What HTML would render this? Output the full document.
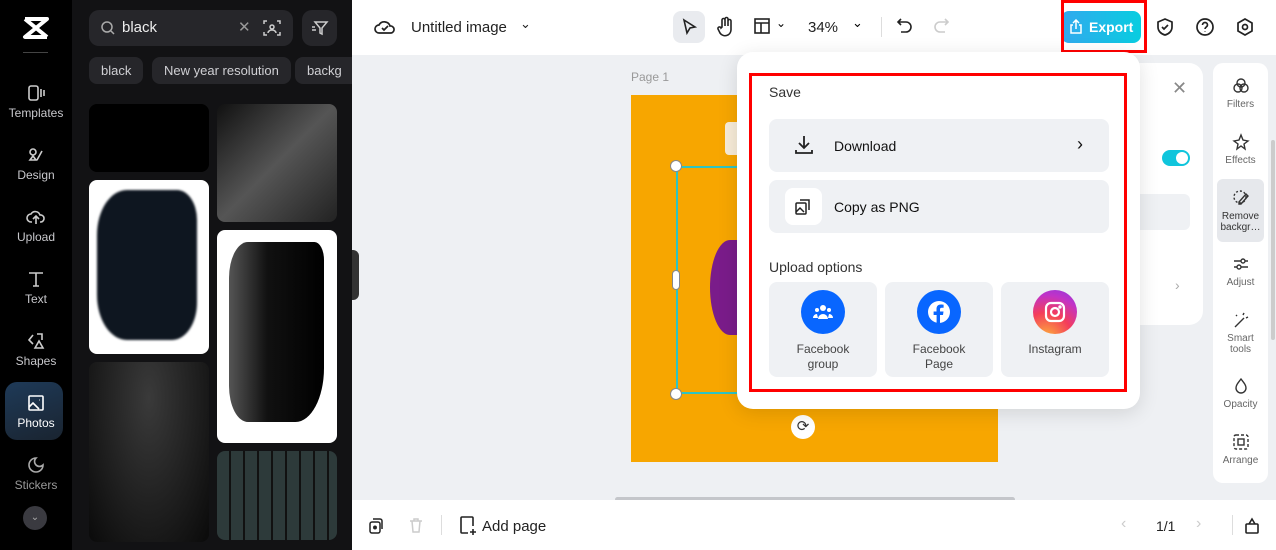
<!DOCTYPE html>
<html><head><meta charset="utf-8"><style>
*{box-sizing:border-box;margin:0;padding:0}
body{width:1276px;height:550px;overflow:hidden;font-family:"Liberation Sans",sans-serif;background:#eef0f3;position:relative}
.abs{position:absolute}
.nav{left:0;top:0;width:72px;height:550px;background:#000}
.navi{position:absolute;left:0;width:72px;text-align:center;color:#c8c8cc;font-size:12px}
.navi svg{display:block;margin:0 auto 3px}
.panel{left:72px;top:0;width:280px;height:550px;background:#121214;overflow:hidden}
.chip{position:absolute;top:57px;height:27px;border-radius:8px;background:#26262a;color:#d0d0d4;font-size:13px;line-height:27px;padding:0 12px;white-space:nowrap}
.img{position:absolute;border-radius:8px;overflow:hidden}
.top{left:352px;top:0;width:924px;height:55px;background:#fff}
.bot{left:352px;top:500px;width:924px;height:50px;background:#fff}
.pop{left:737px;top:52px;width:403px;height:357px;background:#fff;border-radius:16px;box-shadow:0 4px 20px rgba(0,0,0,.12)}
.row{position:absolute;left:32px;width:340px;height:53px;background:#eff1f4;border-radius:8px;font-size:14px;color:#111}
.up{position:absolute;top:230px;width:108px;height:95px;background:#eff1f4;border-radius:8px;text-align:center;font-size:12px;color:#444;line-height:15px}
.up .c{width:44px;height:44px;border-radius:50%;margin:8px auto 8px;display:flex;align-items:center;justify-content:center}
.tool{position:absolute;left:0;width:55px;text-align:center;font-size:10px;color:#666;line-height:11px}
.tool svg{display:block;margin:0 auto 4px}
</style></head><body>
<div class="abs nav">
 <svg class="abs" style="left:22px;top:16px" width="28" height="24" viewBox="0 0 28 24"><path d="M3 3h22L3 21h22M3 3l22 18" stroke="#fff" stroke-width="4" fill="none" stroke-linejoin="round"/></svg>
 <div class="abs" style="left:23px;top:52px;width:25px;height:1px;background:#444"></div>
 <div class="navi" style="top:83px"><svg width="20" height="20" viewBox="0 0 20 20" fill="none" stroke="#ccc" stroke-width="1.6"><rect x="3" y="3" width="9" height="14" rx="2"/><path d="M15 6v8M18 7v6"/></svg>Templates</div>
 <div class="navi" style="top:145px"><svg width="20" height="20" viewBox="0 0 20 20" fill="none" stroke="#ccc" stroke-width="1.6"><circle cx="7" cy="7" r="3"/><path d="M11 15l5-9M4 15h6l-3-4z"/></svg>Design</div>
 <div class="navi" style="top:207px"><svg width="20" height="20" viewBox="0 0 20 20" fill="none" stroke="#ccc" stroke-width="1.6"><path d="M6 15H5a4 4 0 010-8 5 5 0 019 1 3 3 0 011 7h-1M10 17v-7M7 12l3-3 3 3"/></svg>Upload</div>
 <div class="navi" style="top:269px"><svg width="20" height="20" viewBox="0 0 20 20" fill="none" stroke="#ccc" stroke-width="1.6"><path d="M3 4h14M10 4v13M7 17h6"/></svg>Text</div>
 <div class="navi" style="top:331px"><svg width="20" height="20" viewBox="0 0 20 20" fill="none" stroke="#ccc" stroke-width="1.6"><path d="M7 4l-4 5 4 4M11 3h5v6M9 17l4-7 4 7z"/></svg>Shapes</div>
 <div class="abs" style="left:5px;top:382px;width:58px;height:58px;border-radius:12px;background:linear-gradient(160deg,#1e3a58,#1a2430)"></div>
 <div class="navi" style="top:393px;color:#fff"><svg width="20" height="20" viewBox="0 0 20 20" fill="none" stroke="#fff" stroke-width="1.6"><rect x="3" y="3" width="14" height="14" rx="1"/><path d="M3 14l4-4 6 6M13 7h.5"/></svg>Photos</div>
 <div class="navi" style="top:455px;color:#999"><svg width="20" height="20" viewBox="0 0 20 20" fill="none" stroke="#aaa" stroke-width="1.6"><path d="M10 3a7 7 0 107 7 4 4 0 01-7-7z"/></svg>Stickers</div>
 <div class="abs" style="left:23px;top:506px;width:24px;height:24px;border-radius:50%;background:#3a3a40;color:#aaa;font-size:10px;text-align:center;line-height:24px">⌄</div>
</div>
<div class="abs panel">
 <div class="abs" style="left:17px;top:10px;width:204px;height:36px;border-radius:10px;background:#26262a"></div>
 <svg class="abs" style="left:28px;top:20px" width="16" height="16" viewBox="0 0 16 16" fill="none" stroke="#aaa" stroke-width="1.5"><circle cx="7" cy="7" r="5"/><path d="M11 11l3 3"/></svg>
 <div class="abs" style="left:50px;top:19px;color:#eee;font-size:15px">black</div>
 <div class="abs" style="left:166px;top:18px;color:#999;font-size:15px">✕</div>
 <svg class="abs" style="left:190px;top:18px" width="20" height="20" viewBox="0 0 20 20" fill="none" stroke="#ccc" stroke-width="1.5"><path d="M2 6V3h3M15 3h3v3M18 14v3h-3M5 17H2v-3"/><circle cx="10" cy="9" r="2"/><path d="M6 15a4 3 0 018 0"/></svg>
 <div class="abs" style="left:230px;top:10px;width:35px;height:36px;border-radius:10px;background:#26262a"></div>
 <svg class="abs" style="left:239px;top:19px" width="18" height="18" viewBox="0 0 18 18" fill="none" stroke="#ccc" stroke-width="1.5"><path d="M4 3h12l-5 6v6l-2-1V9zM1 8h3M1 11h4"/></svg>
 <div class="chip" style="left:17px">black</div>
 <div class="chip" style="left:80px">New year resolution</div>
 <div class="chip" style="left:223px;width:57px;border-radius:8px 0 0 8px;overflow:hidden">backg</div>
 <div class="img" style="left:17px;top:104px;width:120px;height:68px;background:#000"></div>
 <div class="img" style="left:17px;top:180px;width:120px;height:174px;background:#fff"><div style="position:absolute;left:8px;top:10px;width:100px;height:150px;background:#0e1620;border-radius:30% 20% 25% 30%;filter:blur(1px)"></div></div>
 <div class="img" style="left:17px;top:362px;width:120px;height:180px;background:radial-gradient(ellipse at 50% 20%,#3a3a3a,#0a0a0a)"></div>
 <div class="img" style="left:145px;top:104px;width:120px;height:118px;background:linear-gradient(135deg,#111,#555 50%,#222)"></div>
 <div class="img" style="left:145px;top:230px;width:120px;height:213px;background:#fff"><div style="position:absolute;left:12px;top:12px;width:95px;height:180px;background:linear-gradient(90deg,#555,#111 40%,#000);border-radius:20% 10% 30% 20%"></div></div>
 <div class="img" style="left:145px;top:451px;width:120px;height:89px;background:repeating-linear-gradient(90deg,#2d3a3a 0 12px,#111 12px 14px),#333"></div>
</div>
<div class="abs" style="left:352px;top:250px;width:7px;height:50px;background:#333;border-radius:0 6px 6px 0"></div>
<div class="abs top">
 <svg class="abs" style="left:22px;top:17px" width="22" height="20" viewBox="0 0 22 20" fill="none" stroke="#222" stroke-width="1.7"><path d="M6 16H5a4 4 0 010-8 6 6 0 0111 1 3.5 3.5 0 011 7H6z"/><path d="M8 11l2 2 4-4"/></svg>
 <div class="abs" style="left:59px;top:19px;font-size:15px;color:#222">Untitled image</div>
 <div class="abs" style="left:168px;top:16px;font-size:13px;color:#222">⌄</div>
 <div class="abs" style="left:321px;top:11px;width:32px;height:32px;border-radius:8px;background:#e9ebef"></div>
 <svg class="abs" style="left:328px;top:18px" width="18" height="18" viewBox="0 0 18 18" fill="none" stroke="#222" stroke-width="1.6"><path d="M4 2l11 7-5 1-3 5z"/></svg>
 <svg class="abs" style="left:364px;top:16px" width="20" height="22" viewBox="0 0 20 22" fill="none" stroke="#222" stroke-width="1.6"><path d="M6 11V4a1.5 1.5 0 013 0v6V3a1.5 1.5 0 013 0v7V5a1.5 1.5 0 013 0v9a6 6 0 01-11 3l-2-4a1.5 1.5 0 013-1z"/></svg>
 <svg class="abs" style="left:402px;top:18px" width="16" height="16" viewBox="0 0 16 16" fill="none" stroke="#222" stroke-width="1.6"><rect x="1" y="1" width="14" height="14"/><path d="M1 5h14M7 5v10"/></svg>
 <div class="abs" style="left:424px;top:16px;font-size:12px">⌄</div>
 <div class="abs" style="left:456px;top:19px;font-size:15px;color:#222">34%</div>
 <div class="abs" style="left:500px;top:15px;font-size:13px">⌄</div>
 <div class="abs" style="left:529px;top:17px;width:1px;height:20px;background:#ddd"></div>
 <svg class="abs" style="left:544px;top:17px" width="18" height="18" viewBox="0 0 18 18" fill="none" stroke="#222" stroke-width="1.6"><path d="M5 2L2 5l3 3M2 5h8a5 5 0 010 10H5"/></svg>
 <svg class="abs" style="left:580px;top:17px" width="18" height="18" viewBox="0 0 18 18" fill="none" stroke="#ccc" stroke-width="1.6"><path d="M13 2l3 3-3 3M16 5H8a5 5 0 000 10h5"/></svg>
 <div class="abs" style="left:709px;top:11px;width:80px;height:32px;border-radius:8px;background:linear-gradient(90deg,#32a9ee,#08cde0);color:#fff;font-size:14px;font-weight:bold;line-height:32px;padding-left:28px;white-space:nowrap">Export</div>
 <svg class="abs" style="left:717px;top:19px" width="14" height="15" viewBox="0 0 14 15" fill="none" stroke="#fff" stroke-width="1.5"><path d="M4 6H2v8h10V6h-2M7 10V1M4 4l3-3 3 3"/></svg>
 <div class="abs" style="left:709px;top:0;width:86px;height:53px;border:3px solid #f00"></div>
 <svg class="abs" style="left:803px;top:17px" width="20" height="20" viewBox="0 0 20 20" fill="none" stroke="#222" stroke-width="1.7"><path d="M10 2l7 3v5c0 4-3 7-7 8-4-1-7-4-7-8V5z"/><path d="M7 10l2 2 4-4"/></svg>
 <svg class="abs" style="left:843px;top:17px" width="20" height="20" viewBox="0 0 20 20" fill="none" stroke="#222" stroke-width="1.7"><circle cx="10" cy="10" r="8"/><path d="M7.5 8a2.5 2.5 0 115 0c0 2-2.5 2-2.5 4M10 14.5v.5"/></svg>
 <svg class="abs" style="left:883px;top:17px" width="20" height="20" viewBox="0 0 20 20" fill="none" stroke="#222" stroke-width="1.7"><path d="M10 2l7 4v8l-7 4-7-4V6z"/><circle cx="10" cy="10" r="2.5"/></svg>
</div>
<div class="abs" style="left:631px;top:70px;font-size:12px;color:#999">Page 1</div>
<div class="abs" style="left:631px;top:95px;width:367px;height:367px;background:#f7a600"></div>
<div class="abs" style="left:725px;top:122px;width:20px;height:33px;background:#f7ecd8;border-radius:4px"></div>
<div class="abs" style="left:710px;top:240px;width:40px;height:95px;background:#7a1c8a;border-radius:50% 0 0 50%"></div>
<div class="abs" style="left:676px;top:166px;width:70px;height:228px;border:2px solid #2ec4c4;border-right:none"></div>
<div class="abs" style="left:670px;top:160px;width:12px;height:12px;border-radius:50%;background:#fff;border:1px solid #888"></div>
<div class="abs" style="left:670px;top:388px;width:12px;height:12px;border-radius:50%;background:#fff;border:1px solid #888"></div>
<div class="abs" style="left:672px;top:270px;width:8px;height:20px;border-radius:4px;background:#fff;border:1px solid #888"></div>
<div class="abs" style="left:791px;top:415px;width:24px;height:24px;border-radius:50%;background:#fff;text-align:center;line-height:24px;font-size:15px;color:#333">⟳</div>
<div class="abs" style="left:1100px;top:63px;width:103px;height:262px;background:#fff;border-radius:14px"></div>
<div class="abs" style="left:1172px;top:78px;font-size:18px;color:#888">✕</div>
<div class="abs" style="left:1162px;top:150px;width:28px;height:16px;border-radius:8px;background:#10c5dc"><div style="position:absolute;right:2px;top:2px;width:12px;height:12px;border-radius:50%;background:#fff"></div></div>
<div class="abs" style="left:1130px;top:194px;width:60px;height:36px;border-radius:6px;background:#eff1f4"></div>
<div class="abs" style="left:1175px;top:277px;font-size:14px;color:#aaa">›</div>
<div class="abs" style="left:1213px;top:63px;width:55px;height:420px;background:#fff;border-radius:10px">
 <div class="tool" style="top:14px"><svg width="18" height="18" viewBox="0 0 18 18" fill="none" stroke="#333" stroke-width="1.4"><circle cx="9" cy="6" r="4"/><circle cx="6" cy="11" r="4"/><circle cx="12" cy="11" r="4"/></svg>Filters</div>
 <div class="tool" style="top:70px"><svg width="18" height="18" viewBox="0 0 18 18" fill="none" stroke="#333" stroke-width="1.4"><path d="M9 2l2 5 5 1-4 3 1 5-4-3-4 3 1-5-4-3 5-1z"/></svg>Effects</div>
 <div class="abs" style="left:4px;top:116px;width:47px;height:63px;background:#e6e8ec;border-radius:6px"></div>
 <div class="tool" style="top:126px;color:#333"><svg width="18" height="18" viewBox="0 0 18 18" fill="none" stroke="#333" stroke-width="1.4"><circle cx="8" cy="8" r="6" stroke-dasharray="2 2"/><path d="M7 13l7-8 2 2-7 8H7z"/></svg>Remove<br>backgr…</div>
 <div class="tool" style="top:192px"><svg width="18" height="18" viewBox="0 0 18 18" fill="none" stroke="#333" stroke-width="1.4"><path d="M2 6h14M2 12h14"/><circle cx="11" cy="6" r="2" fill="#fff"/><circle cx="7" cy="12" r="2" fill="#fff"/></svg>Adjust</div>
 <div class="tool" style="top:248px"><svg width="18" height="18" viewBox="0 0 18 18" fill="none" stroke="#333" stroke-width="1.4"><path d="M3 16l9-9M11 4l1-2M14 7l2-1M4 4l1 1"/></svg>Smart<br>tools</div>
 <div class="tool" style="top:314px"><svg width="18" height="18" viewBox="0 0 18 18" fill="none" stroke="#333" stroke-width="1.4"><path d="M9 2c3 4 5 6 5 9a5 5 0 01-10 0c0-3 2-5 5-9z"/></svg>Opacity</div>
 <div class="tool" style="top:370px"><svg width="18" height="18" viewBox="0 0 18 18" fill="none" stroke="#333" stroke-width="1.4"><rect x="2" y="2" width="14" height="14" rx="2" stroke-dasharray="3 2"/><rect x="6" y="6" width="6" height="6"/></svg>Arrange</div>
</div>
<div class="abs" style="left:1271px;top:140px;width:4px;height:200px;background:#ccc;border-radius:2px"></div>
<div class="abs pop">
 <div class="abs" style="left:32px;top:32px;font-size:14px;color:#333">Save</div>
 <div class="row" style="top:67px"><svg class="abs" style="left:24px;top:15px" width="22" height="22" viewBox="0 0 22 22" fill="none" stroke="#222" stroke-width="1.8"><path d="M11 2v12M6 9l5 5 5-5M3 16v3h16v-3"/></svg><span class="abs" style="left:65px;top:19px">Download</span><span class="abs" style="left:308px;top:15px;font-size:18px">›</span></div>
 <div class="row" style="top:128px"><div class="abs" style="left:16px;top:8px;width:37px;height:37px;border-radius:8px;background:#fff"></div><svg class="abs" style="left:26px;top:18px" width="17" height="17" viewBox="0 0 17 17" fill="none" stroke="#222" stroke-width="1.5"><rect x="1" y="5" width="10" height="11" rx="1"/><path d="M5 2h9v10M1 14l4-4 4 4"/></svg><span class="abs" style="left:65px;top:19px">Copy as PNG</span></div>
 <div class="abs" style="left:32px;top:207px;font-size:14px;color:#333">Upload options</div>
 <div class="up" style="left:32px"><div class="c" style="background:#0866ff"><svg width="22" height="18" viewBox="0 0 22 18" fill="#fff"><circle cx="11" cy="5" r="3"/><circle cx="5" cy="7" r="2"/><circle cx="17" cy="7" r="2"/><path d="M6 16a5 5 0 0110 0zM1 15a4 4 0 014-4l1 4zM21 15a4 4 0 00-4-4l-1 4z"/></svg></div>Facebook<br>group</div>
 <div class="up" style="left:148px"><div class="c" style="background:#0866ff"><svg width="24" height="24" viewBox="0 0 24 24"><circle cx="12" cy="12" r="11" fill="#fff"/><path d="M13 24V15h3l.5-3.5H13V9.5c0-1 .4-1.7 1.8-1.7h1.8V4.7c-.4 0-1.5-.2-2.7-.2-2.7 0-4.4 1.6-4.4 4.5v2.5H6.6V15h3v9z" fill="#0866ff"/></svg></div>Facebook<br>Page</div>
 <div class="up" style="left:264px"><div class="c" style="background:radial-gradient(circle at 30% 110%,#fdb43a,#f43d5a 45%,#c233c6 75%,#8a3ae0)"><svg width="24" height="24" viewBox="0 0 24 24" fill="none" stroke="#fff" stroke-width="2.2"><rect x="3" y="3" width="18" height="18" rx="5"/><circle cx="12" cy="12" r="4"/><circle cx="17" cy="7" r=".6" fill="#fff"/></svg></div>Instagram</div>
</div>
<div class="abs" style="left:749px;top:73px;width:378px;height:319px;border:3px solid #f00"></div>
<div class="abs" style="left:615px;top:497px;width:400px;height:5px;border-radius:3px;background:#c4c6ca"></div>
<div class="abs bot">
 <svg class="abs" style="left:16px;top:17px" width="16" height="18" viewBox="0 0 16 18" fill="none" stroke="#222" stroke-width="1.5"><rect x="2" y="5" width="10" height="11" rx="2"/><path d="M5 2h7a2 2 0 012 2v8"/><circle cx="7" cy="10.5" r="1.2" fill="#222"/></svg>
 <svg class="abs" style="left:57px;top:17px" width="14" height="16" viewBox="0 0 14 16" fill="none" stroke="#ccc" stroke-width="1.5"><path d="M1 4h12M5 4V2h4v2M3 4l1 11h6l1-11"/></svg>
 <div class="abs" style="left:89px;top:15px;width:1px;height:20px;background:#ddd"></div>
 <svg class="abs" style="left:107px;top:16px" width="18" height="20" viewBox="0 0 18 20" fill="none" stroke="#222" stroke-width="1.6"><path d="M9 17H3a1 1 0 01-1-1V2a1 1 0 011-1h10a1 1 0 011 1v8M14 13v6M11 16h6"/></svg>
 <div class="abs" style="left:130px;top:18px;font-size:15px;color:#222">Add page</div>
 <div class="abs" style="left:769px;top:15px;font-size:16px;color:#ccc">‹</div>
 <div class="abs" style="left:804px;top:18px;font-size:14px;color:#222">1/1</div>
 <div class="abs" style="left:844px;top:15px;font-size:16px;color:#ccc">›</div>
 <div class="abs" style="left:880px;top:15px;width:1px;height:20px;background:#ddd"></div>
 <svg class="abs" style="left:892px;top:15px" width="16" height="20" viewBox="0 0 16 20" fill="none" stroke="#222" stroke-width="1.6"><rect x="2" y="9" width="12" height="9" rx="1"/><path d="M5 9l3-5 3 5"/></svg>
</div>
</body></html>
